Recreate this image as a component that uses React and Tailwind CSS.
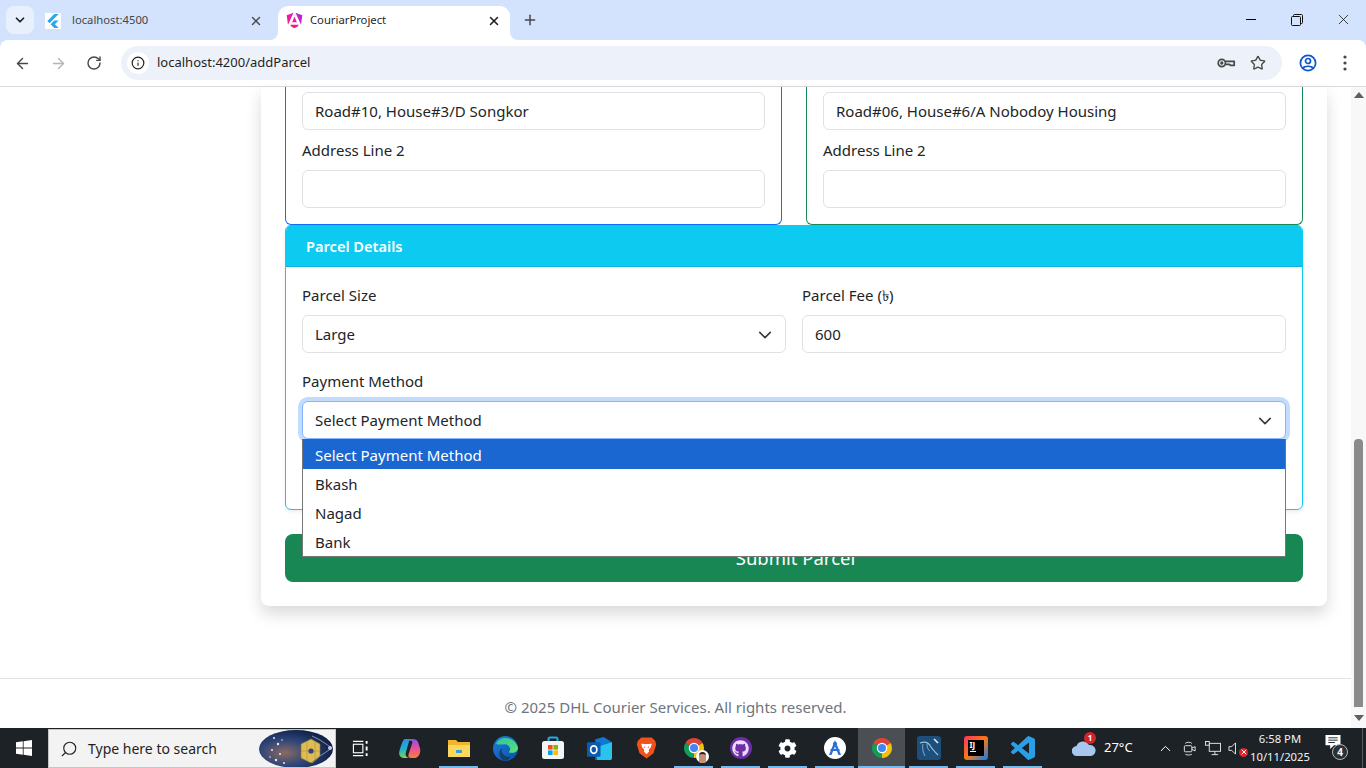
import { ArrowLeft, ArrowRight, RotateCw, Info, Star, X, Plus, ChevronDown, ChevronUp, Search } from "lucide-react";
import { FaGithub, FaCog } from "react-icons/fa";

const selectArrow = "M2 5l6 6 6-6";

function Chevron() {
  return (
    <svg viewBox="0 0 16 16" className="absolute right-[13px] top-[12px] w-3.5 h-3.5 pointer-events-none" fill="none" stroke="#343a40" strokeWidth="1.8" strokeLinecap="round" strokeLinejoin="round">
      <path d={selectArrow} />
    </svg>
  );
}

function Field({ value }) {
  return (
    <input
      readOnly
      value={value}
      className="block w-full h-[38px] px-3 bg-white border border-[#dee2e6] rounded-md text-[#212529] text-[15px] outline-none"
    />
  );
}

function SelectBox({ value, focused }) {
  return (
    <div
      className={
        focused
          ? "relative h-[38px] px-3 flex items-center bg-white border border-[#86b7fe] rounded-md text-[#212529] ring-4 ring-[#0d6efd]/25"
          : "relative h-[38px] px-3 flex items-center bg-white border border-[#dee2e6] rounded-md text-[#212529]"
      }
    >
      {value}
      <Chevron />
    </div>
  );
}

function Label({ children }) {
  return <div className="h-6 leading-6 mb-2 text-[#212529]">{children}</div>;
}

function AddressCard({ border, line1 }) {
  return (
    <div className={"flex-1 px-4 pt-[5px] pb-4 border-x border-b rounded-b-md " + border}>
      <Field value={line1} />
      <div className="mt-2">
        <Label>Address Line 2</Label>
      </div>
      <Field value="" />
    </div>
  );
}

function ChromeLogo({ size = 24 }) {
  return (
    <svg viewBox="0 0 48 48" width={size} height={size}>
      <path d="M24 24 L6.7 14 A20 20 0 0 1 41.3 14Z" fill="#db4437" />
      <path d="M24 24 L41.3 14 A20 20 0 0 1 24 44Z" fill="#f4c20d" />
      <path d="M24 24 L24 44 A20 20 0 0 1 6.7 14Z" fill="#0f9d58" />
      <circle cx="24" cy="24" r="10.5" fill="#fff" />
      <circle cx="24" cy="24" r="8" fill="#4285f4" />
    </svg>
  );
}

function AngularLogo() {
  return (
    <svg viewBox="0 0 24 24" width="17" height="17">
      <defs>
        <linearGradient id="ng" x1="0" y1="1" x2="1" y2="0">
          <stop offset="0" stopColor="#f5163c" />
          <stop offset="0.45" stopColor="#ee1aa8" />
          <stop offset="1" stopColor="#9a2cf0" />
        </linearGradient>
      </defs>
      <path d="M10.6 1 L2.8 18 L1 4.5Z M13.4 1 L23 4.5 L21.2 18Z M7 20 L12 23 L17 20 L17.8 18 H6.2Z M12 6.5 L15.3 14.5 H8.7Z" fill="url(#ng)" />
    </svg>
  );
}

function FlutterLogo() {
  return (
    <span className="w-4 h-4 bg-white flex items-center justify-center shrink-0">
      <svg viewBox="0 0 24 24" width="14" height="14">
        <path d="M14.314 0L2.3 12 6 15.7 21.684.012h-7.357zm.014 11.072L7.857 17.53l6.47 6.47H21.7l-6.46-6.468 6.46-6.46h-7.37z" fill="#29a8e8" />
      </svg>
    </span>
  );
}

function KeyIcon() {
  return (
    <svg viewBox="0 0 20 20" width="20" height="20" fill="none" stroke="#474747" strokeWidth="1.7">
      <circle cx="5.8" cy="10" r="3.6" />
      <path d="M9.4 8.4 H18.2 V12.4 H14.5 L13.5 11.4 H9.4" strokeLinejoin="round" />
      <circle cx="5.8" cy="10" r="0.8" fill="#474747" />
    </svg>
  );
}

function ProfileIcon() {
  return (
    <svg viewBox="0 0 20 20" width="20" height="20" fill="none" stroke="#0b57d0" strokeWidth="1.7">
      <circle cx="10" cy="10" r="7.6" />
      <circle cx="10" cy="8" r="2.5" />
      <path d="M4.8 15.2 C6.5 12.6 13.5 12.6 15.2 15.2" />
    </svg>
  );
}

function Dots() {
  return (
    <svg viewBox="0 0 4 16" width="4" height="16" fill="#474747">
      <circle cx="2" cy="2" r="1.6" />
      <circle cx="2" cy="8" r="1.6" />
      <circle cx="2" cy="14" r="1.6" />
    </svg>
  );
}

function RestoreIcon() {
  return (
    <svg viewBox="0 0 12 12" width="12" height="12" fill="none" stroke="#111" strokeWidth="1">
      <rect x="0.5" y="2.5" width="9" height="9" rx="1" />
      <path d="M2.5 2.5 V1.5 A1 1 0 0 1 3.5 0.5 H10.5 A1 1 0 0 1 11.5 1.5 V8.5 A1 1 0 0 1 10.5 9.5 H9.5" />
    </svg>
  );
}

function TabFoot({ side }) {
  return (
    <svg viewBox="0 0 8 8" className={side === "left" ? "absolute -left-2 bottom-0 w-2 h-2" : "absolute -right-2 bottom-0 w-2 h-2"}>
      <path d={side === "left" ? "M8 0 V8 H0 A8 8 0 0 0 8 0Z" : "M0 0 V8 H8 A8 8 0 0 1 0 0Z"} fill="#fff" />
    </svg>
  );
}

function BrowserChrome() {
  return (
    <div className="shrink-0 bg-[#d3e3fd]">
      {/* TABS */}
      <div className="h-10 flex items-end pl-[6px]">
        <div className="w-[28px] h-[28px] mb-[6px] rounded-lg bg-[#e8f0fe] flex items-center justify-center">
          <ChevronDown size={14} strokeWidth={3} color="#1f1f1f" />
        </div>
        <div className="w-[239px] h-[34px] pb-[5px] pl-[7px] pr-[14px] flex items-center text-[11.25px] text-[#444746] ml-[4px]">
          <FlutterLogo />
          <span className="ml-[11px] flex-1">localhost:4500</span>
          <X size={14} strokeWidth={2.4} color="#474747" />
        </div>
        <div className="relative w-[232px] h-[34px] ml-px pb-[5px] pl-[8px] pr-[9px] flex items-center bg-white rounded-t-[10px] text-[11.25px] text-[#1f1f1f]">
          <TabFoot side="left" />
          <TabFoot side="right" />
          <AngularLogo />
          <span className="ml-[7px] flex-1">CouriarProject</span>
          <X size={14} strokeWidth={2.6} color="#1f1f1f" />
        </div>
        <div className="ml-[12px] mb-[12px]">
          <Plus size={16} strokeWidth={2.2} color="#474747" />
        </div>
        <div className="ml-auto flex items-center self-start h-10 pb-px">
          <div className="w-[46px] flex justify-center"><span className="block w-[10px] h-px bg-black" /></div>
          <div className="w-[46px] flex justify-center"><RestoreIcon /></div>
          <div className="w-[46px] flex justify-center"><X size={17} strokeWidth={1.1} color="#111" /></div>
        </div>
      </div>
      {/* TOOLBAR */}
      <div className="h-[47px] bg-white rounded-t-lg border-b border-[#dadce0] flex items-center pl-[14px] pr-[19px]">
        <ArrowLeft size={17} color="#474747" strokeWidth={2} />
        <ArrowRight size={17} color="#b5b5b5" strokeWidth={2} className="ml-[19px]" />
        <RotateCw size={16} color="#474747" strokeWidth={2.1} className="ml-[19px]" />
        <div className="ml-[19px] flex-1 h-[34px] rounded-full bg-[#edf2fa] flex items-center pl-[6px] pr-[16px]">
          <span className="w-[22px] h-[22px] bg-white rounded-full flex items-center justify-center">
            <Info size={14} color="#1f1f1f" strokeWidth={2} />
          </span>
          <span className="ml-2 flex-1 text-[13px] text-[#1f1f1f]">localhost:4200/addParcel</span>
          <KeyIcon />
          <Star size={16} color="#474747" strokeWidth={2} className="ml-[14px]" />
        </div>
        <div className="ml-[16px]"><ProfileIcon /></div>
        <div className="ml-[25px]"><Dots /></div>
      </div>
    </div>
  );
}

function Scrollbar() {
  return (
    <div className="w-[15px] shrink-0 bg-[#f8f8f8] flex flex-col items-center relative">
      <svg viewBox="0 0 10 6" className="w-[10px] h-[6px] mt-[5px]" fill="#5f5f5f"><path d="M5 0 L10 6 H0Z" /></svg>
      <div className="w-[9px] h-[268px] mt-[341px] rounded-t-[4px] bg-[#8b8b8b]" />
      <svg viewBox="0 0 10 6" className="w-[10px] h-[6px] mt-[8px]" fill="#5f5f5f"><path d="M0 0 H10 L5 6Z" /></svg>
    </div>
  );
}

function ParcelForm() {
  return (
    <div className="ml-[261px] mr-6 bg-white rounded-b-lg shadow-[0_8px_16px_rgba(0,0,0,0.15)] px-6 pb-6">
      <div className="flex gap-6">
        <AddressCard border="border-[#0d6efd]" line1="Road#10, House#3/D Songkor" />
        <AddressCard border="border-[#198754]" line1="Road#06, House#6/A Nobodoy Housing" />
      </div>

      {/* PARCEL DETAILS */}
      <div className="border border-[#0dcaf0] rounded-md shadow-[0_2px_4px_rgba(0,0,0,0.075)]">
        <div className="h-[42px] -mt-px pt-[3px] flex items-center px-5 bg-[#0dcaf0] border-b border-[#0cb5d8] rounded-t-md text-white text-[14.6px] font-semibold">
          Parcel Details
        </div>
        <div className="relative px-4 pt-4 pb-[70px]">
          <div className="grid grid-cols-2 gap-4 mb-4">
            <div>
              <Label>Parcel Size</Label>
              <SelectBox value="Large" />
            </div>
            <div>
              <Label>Parcel Fee (৳)</Label>
              <Field value="600" />
            </div>
          </div>
          <Label>Payment Method</Label>
          <div className="relative">
            <SelectBox value="Select Payment Method" focused />
            <div className="absolute z-10 top-[38px] left-0 right-0 bg-white border-x border-b border-[#767676] text-[#212529]">
              <div className="h-[30px] leading-[32px] px-3 bg-[#1a67d2] text-white">Select Payment Method</div>
              <div className="h-[29px] leading-[31px] px-3">Bkash</div>
              <div className="h-[29px] leading-[31px] px-3">Nagad</div>
              <div className="h-[29px] leading-[31px] px-3">Bank</div>
            </div>
          </div>
        </div>
      </div>

      <button className="block w-full h-12 mt-6 pl-[3px] bg-[#198754] rounded-lg text-white text-[18.5px]">Submit Parcel</button>
    </div>
  );
}

function WindowsLogo() {
  return (
    <svg viewBox="0 0 16 16" width="16" height="16" fill="#fff">
      <path d="M0 2.3 L6.8 1.3 V7.6 H0Z M7.6 1.2 L16 0 V7.6 H7.6Z M0 8.4 H6.8 V14.7 L0 13.7Z M7.6 8.4 H16 V16 L7.6 14.8Z" />
    </svg>
  );
}

function SearchArt() {
  return (
    <svg viewBox="0 0 76 38" width="76" height="38">
      <defs>
        <radialGradient id="sky" cx="0.35" cy="0.6" r="0.7">
          <stop offset="0" stopColor="#8a6a62" />
          <stop offset="0.5" stopColor="#2c4478" />
          <stop offset="1" stopColor="#0c1a3d" />
        </radialGradient>
      </defs>
      <ellipse cx="38" cy="19" rx="37" ry="19" fill="url(#sky)" />
      <g fill="#e6e9f5">
        <circle cx="16" cy="8" r="1" /><circle cx="20" cy="14" r="1.2" /><circle cx="14" cy="20" r="1" />
        <circle cx="22" cy="24" r="1" /><circle cx="18" cy="30" r="1.2" /><circle cx="26" cy="33" r="1" />
        <circle cx="12" cy="27" r="0.8" /><circle cx="24" cy="10" r="0.8" />
      </g>
      <path d="M54 6 L62 10 L74 18 L62 26 L54 33" fill="none" stroke="#b8bcd8" strokeWidth="0.7" />
      <path d="M53 9 L62 14 L62 26 L53 33 L43 28 L43 14Z" fill="#dcbc55" stroke="#8f7426" strokeWidth="0.6" />
      <path d="M43 21 H62 M49 11 V31 M57 11 V30" stroke="#a88a30" strokeWidth="0.5" />
      <circle cx="53" cy="21" r="2.6" fill="#3c3f7a" />
      <circle cx="72" cy="18" r="2" fill="#c8c9e8" />
    </svg>
  );
}

function TaskView() {
  return (
    <svg viewBox="0 0 18 18" width="17" height="17" fill="none" stroke="#fff" strokeWidth="1.2">
      <path d="M1 1.5 H12 M1 16.5 H12" />
      <rect x="1.5" y="4.5" width="10" height="9" />
      <path d="M15.5 1 V4 M15.5 7 V11 M15.5 14 V17" strokeWidth="2" />
    </svg>
  );
}

function Copilot() {
  return (
    <svg viewBox="0 0 24 24" width="23" height="23">
      <defs>
        <linearGradient id="cpa" x1="0.2" y1="0" x2="0.3" y2="1">
          <stop offset="0" stopColor="#2a8fe8" />
          <stop offset="0.55" stopColor="#25b0c8" />
          <stop offset="1" stopColor="#7fd05a" />
        </linearGradient>
        <linearGradient id="cpb" x1="0.6" y1="0" x2="0.6" y2="1">
          <stop offset="0" stopColor="#7b5be8" />
          <stop offset="0.45" stopColor="#e84aa8" />
          <stop offset="1" stopColor="#f6812f" />
        </linearGradient>
      </defs>
      <path d="M9 2 H15 C18 2 20 3 21 5.5 L23 12 C24 16 22 21 18 22 H14 C11 22 10.5 20 11 18 L15 6 C15.4 4.5 14 4 13 4 Z" fill="url(#cpb)" />
      <path d="M7.5 2 H14 C12.5 2.5 11.8 3.5 11.5 4.5 L8 17 C7.4 19.5 9 21.5 12 22 H7 C3.5 22 1 20 1.2 16.5 C1.4 14 3.5 8 5 4.5 C5.5 3 6.3 2 7.5 2Z" fill="url(#cpa)" />
    </svg>
  );
}

function Explorer() {
  return (
    <svg viewBox="0 0 24 22" width="24" height="22">
      <path d="M1 3 H9 L11 5 H23 V20 H1Z" fill="#f0b52c" />
      <path d="M1 8 H23 V20 H1Z" fill="#fbd75b" />
      <rect x="9" y="13" width="6" height="3" fill="#3a9fd8" />
    </svg>
  );
}

function Edge() {
  return (
    <svg viewBox="0 0 24 24" width="25" height="25">
      <defs>
        <linearGradient id="edgeA" x1="0" y1="0" x2="1" y2="1">
          <stop offset="0" stopColor="#2bc4a0" />
          <stop offset="1" stopColor="#5de07a" />
        </linearGradient>
        <linearGradient id="edgeB" x1="0" y1="0" x2="1" y2="1">
          <stop offset="0" stopColor="#1a7fd8" />
          <stop offset="1" stopColor="#0c4fa8" />
        </linearGradient>
      </defs>
      <circle cx="12" cy="12" r="12" fill="url(#edgeB)" />
      <path d="M3 7 C6 0 20 -1 24 11 C24.3 16 18 17 15 15.5 C18 13 16 8 11 8 C7 8 4 9 3 7Z" fill="url(#edgeA)" />
      <path d="M10 23.5 C5 21 5 14 9 11.5 C7 16 11 21 17 20 C15 23 12 24 10 23.5Z" fill="#1d1f2e" opacity="0.55" />
    </svg>
  );
}

function Store() {
  return (
    <svg viewBox="0 0 24 24" width="24" height="24">
      <path d="M7.5 6 V3 A1.5 1.5 0 0 1 9 1.5 H15 A1.5 1.5 0 0 1 16.5 3 V6" fill="none" stroke="#27a9e6" strokeWidth="2" />
      <rect x="1" y="5" width="22" height="18" rx="2.5" fill="#f4f4f4" />
      <rect x="7" y="9" width="4.6" height="4.6" fill="#f25022" />
      <rect x="12.4" y="9" width="4.6" height="4.6" fill="#7fba00" />
      <rect x="7" y="14.4" width="4.6" height="4.6" fill="#00a4ef" />
      <rect x="12.4" y="14.4" width="4.6" height="4.6" fill="#ffb900" />
    </svg>
  );
}

function Outlook() {
  return (
    <svg viewBox="0 0 24 24" width="25" height="25">
      <path d="M8 3 L16 1 L24 6 V21 C24 22 23 23 22 23 H8Z" fill="#0f78d4" />
      <path d="M8 11 L24 6 V21 C24 22 23 23 22 23 H10Z" fill="#29c3ee" />
      <rect x="0" y="6" width="13" height="14" rx="1" fill="#0a5cb0" />
      <ellipse cx="6.5" cy="13" rx="3" ry="3.6" fill="none" stroke="#fff" strokeWidth="1.6" />
    </svg>
  );
}

function Brave() {
  return (
    <svg viewBox="0 0 24 26" width="21" height="24">
      <path d="M6 1 H18 L22 5 L23 9 L20 19 L12 25 L4 19 L1 9 L2 5Z" fill="#f1511b" />
      <path d="M6 8 L10 8.5 H14 L18 8 L17 12 L14.5 15 L15 17 L12 20 L9 17 L9.5 15 L7 12Z" fill="#fff" />
      <path d="M9 11 L11 12 L9.5 13Z M15 11 L13 12 L14.5 13Z" fill="#f1511b" />
    </svg>
  );
}

function ChromeProfile() {
  return (
    <span className="relative block w-6 h-6">
      <ChromeLogo size={24} />
      <span className="absolute -right-[3px] -bottom-[3px] w-[13px] h-[13px] rounded-full bg-white flex items-end justify-center overflow-hidden">
        <span className="relative w-[7px] h-[11px] rounded-t-full bg-[#c98f73] border-t-2 border-[#26211f]" />
      </span>
    </span>
  );
}

function GithubApp() {
  return (
    <span className="w-[22px] h-[22px] rounded-full bg-[#6e2da8] flex items-center justify-center">
      <FaGithub size={17} color="#e9dcf5" />
    </span>
  );
}

function AndroidApp() {
  return (
    <svg viewBox="0 0 24 24" width="24" height="24">
      <circle cx="12" cy="12" r="11" fill="#fff" />
      <path d="M12 4 L18 19 H15.5 L12 10.5 L8.5 19 H6Z" fill="#2a6fdc" />
      <path d="M7.5 13 H16.5 V15 H7.5Z" fill="#2a6fdc" />
      <circle cx="12" cy="8" r="2.2" fill="#2a6fdc" />
    </svg>
  );
}

function Workbench() {
  return (
    <svg viewBox="0 0 24 24" width="24" height="24">
      <rect width="24" height="24" rx="3" fill="#1d4f7c" />
      <path d="M3 7 C8 5 12 7 14 11 C16 14 18 16 21 19" fill="none" stroke="#9fc3dc" strokeWidth="1.2" />
      <path d="M6 8 C5 12 6 16 8 20 M10 8 C10 11 11 14 13 15" fill="none" stroke="#7fa9c6" strokeWidth="1" />
      <path d="M17 3 L21 7" stroke="#e4eef5" strokeWidth="1.6" />
    </svg>
  );
}

function IntelliJ() {
  return (
    <span className="relative block w-6 h-6 rounded-[3px] bg-[linear-gradient(135deg,#fe315d,#f97a12_50%,#087cfa)]">
      <span className="absolute inset-[4px] bg-black flex flex-col pl-[2px] text-white text-[8px] leading-[9px] font-bold">
        IJ
        <span className="block w-[6px] h-px bg-white mt-[2px]" />
      </span>
    </span>
  );
}

function VsCode() {
  return (
    <svg viewBox="0 0 24 24" width="24" height="24">
      <path d="M23.15 2.587L18.21.21a1.494 1.494 0 0 0-1.705.29l-9.46 8.63-4.12-3.128a.999.999 0 0 0-1.276.057L.327 7.261A1 1 0 0 0 .326 8.74L3.899 12 .326 15.26a1 1 0 0 0 .001 1.479L1.65 17.94a.999.999 0 0 0 1.276.057l4.12-3.128 9.46 8.63a1.492 1.492 0 0 0 1.704.29l4.942-2.377A1.5 1.5 0 0 0 24 20.06V3.939a1.5 1.5 0 0 0-.85-1.352zm-5.146 14.861L10.826 12l7.178-5.448v10.896z" fill="#2a9fe8" />
    </svg>
  );
}

function Slot({ children, running, active }) {
  return (
    <div className={active ? "relative w-[47px] h-10 flex items-center justify-center bg-[#4b4f53]" : "relative w-[47px] h-10 flex items-center justify-center"}>
      {children}
      {running && <span className={active ? "absolute bottom-0 inset-x-0 h-[2px] bg-[#76b9ed]" : "absolute bottom-0 inset-x-[4px] h-[2px] bg-[#76b9ed]"} />}
    </div>
  );
}

function Taskbar() {
  return (
    <div className="h-10 shrink-0 bg-[#1d2226] flex items-center text-white">
      <div className="w-12 flex justify-center"><WindowsLogo /></div>
      <div className="w-[288px] h-[39px] mt-px bg-[#f3f3f3] border border-[#c6c6c6] flex items-center pl-[11px] text-[#1f1f1f] text-sm relative overflow-hidden">
        <Search size={18} color="#222" strokeWidth={1.5} className="-scale-x-100" />
        <span className="ml-[10px]">Type here to search</span>
        <div className="ml-auto mr-px"><SearchArt /></div>
      </div>
      <div className="w-[48px] flex justify-center"><TaskView /></div>
      <div className="w-[51px] flex justify-center"><Copilot /></div>
      <Slot running><Explorer /></Slot>
      <Slot><Edge /></Slot>
      <Slot><Store /></Slot>
      <Slot><Outlook /></Slot>
      <Slot><Brave /></Slot>
      <Slot running><ChromeProfile /></Slot>
      <Slot running><GithubApp /></Slot>
      <Slot running><FaCog size={19} color="#fff" /></Slot>
      <Slot running><AndroidApp /></Slot>
      <Slot running active><ChromeLogo size={24} /></Slot>
      <Slot running><Workbench /></Slot>
      <Slot running><IntelliJ /></Slot>
      <Slot running><VsCode /></Slot>

      {/* WEATHER */}
      <div className="relative ml-[26px] w-[24px] flex items-center">
        <svg viewBox="0 0 24 16" width="24" height="16">
          <path d="M5 16 A5 5 0 0 1 4.5 6 A7 7 0 0 1 17 5 A5.5 5.5 0 0 1 19 16Z" fill="#a9c6ee" />
        </svg>
        <span className="absolute -top-[8px] left-[12px] w-3 h-3 rounded-full bg-[#d3242b] text-[8px] leading-3 text-center font-bold">1</span>
      </div>
      <span className="ml-[8px] text-[13px] w-[32px]">27°C</span>

      {/* TRAY */}
      <div className="ml-[21px] flex items-center">
        <ChevronUp size={17} strokeWidth={1.4} color="#fff" />
        <svg viewBox="0 0 16 16" width="15" height="15" fill="none" stroke="#e8e8e8" strokeWidth="1" className="ml-[8px]">
          <rect x="2.5" y="5" width="8" height="6.5" rx="1" />
          <path d="M10.5 7.5 L14 6 V10.5 L10.5 9" />
          <path d="M3.5 2.5 C5 1 9 1 10.5 2.5 M3.5 14 C5 15.3 9 15.3 10.5 14" />
        </svg>
        <svg viewBox="0 0 17 16" width="16" height="15" fill="none" stroke="#e8e8e8" strokeWidth="1" className="ml-[8px]">
          <rect x="4.5" y="2.5" width="12" height="8.5" />
          <rect x="0.5" y="0.5" width="4" height="4" fill="#1d2226" />
          <path d="M10.5 11 V14.5 M7 14.5 H14" />
        </svg>
        <span className="relative ml-[7px] block">
          <svg viewBox="0 0 16 16" width="15" height="15" fill="none" stroke="#e8e8e8" strokeWidth="1">
            <path d="M1 6 H4 L8 2 V14 L4 10 H1Z" />
          </svg>
          <span className="absolute -right-[5px] -bottom-px w-[9px] h-[9px] rounded-full bg-[#d9252b] flex items-center justify-center">
            <X size={8} strokeWidth={3} color="#fff" />
          </span>
        </span>
      </div>

      {/* CLOCK */}
      <div className="w-[70px] ml-[2px] text-center text-[11.25px] leading-[18px] text-[#f2f2f2] flex flex-col">
        <span>6:58 PM</span>
        <span>10/11/2025</span>
      </div>

      {/* NOTIFICATIONS */}
      <div className="relative ml-[10px] w-[23px] h-[28px]">
        <svg viewBox="0 0 16 16" width="16" height="15" className="absolute left-0 top-[1px]" fill="#fff">
          <path d="M0 0 H16 V11 H9 L5 15 V11 H0Z" />
          <path d="M3 3 H13 M3 5.5 H13 M3 8 H10" stroke="#1d2226" strokeWidth="1" />
        </svg>
        <span className="absolute left-[7px] top-[10px] w-4 h-4 rounded-full bg-[#2c3135] border border-[#b5b5b5] text-[10px] leading-[14px] text-center font-bold">4</span>
      </div>

      {/* SHOW DESKTOP */}
      <div className="ml-auto mr-[3px] h-full border-l border-[#5a5e62]" />
    </div>
  );
}

export default function App() {
  return (
    <div className="w-[1366px] h-[768px] overflow-hidden flex flex-col bg-white font-['Noto_Sans',sans-serif] text-[15px]">
      <BrowserChrome />

      <div className="flex-1 min-h-0 flex">
        <div className="flex-1 min-w-0 flex flex-col">
          <ParcelForm />
          <footer className="mt-auto h-[50px] border-t border-[#dee2e6] flex items-center justify-center text-[#6c757d] pt-[8px]">
            © 2025 DHL Courier Services. All rights reserved.
          </footer>
        </div>
        <Scrollbar />
      </div>

      <Taskbar />
    </div>
  );
}
